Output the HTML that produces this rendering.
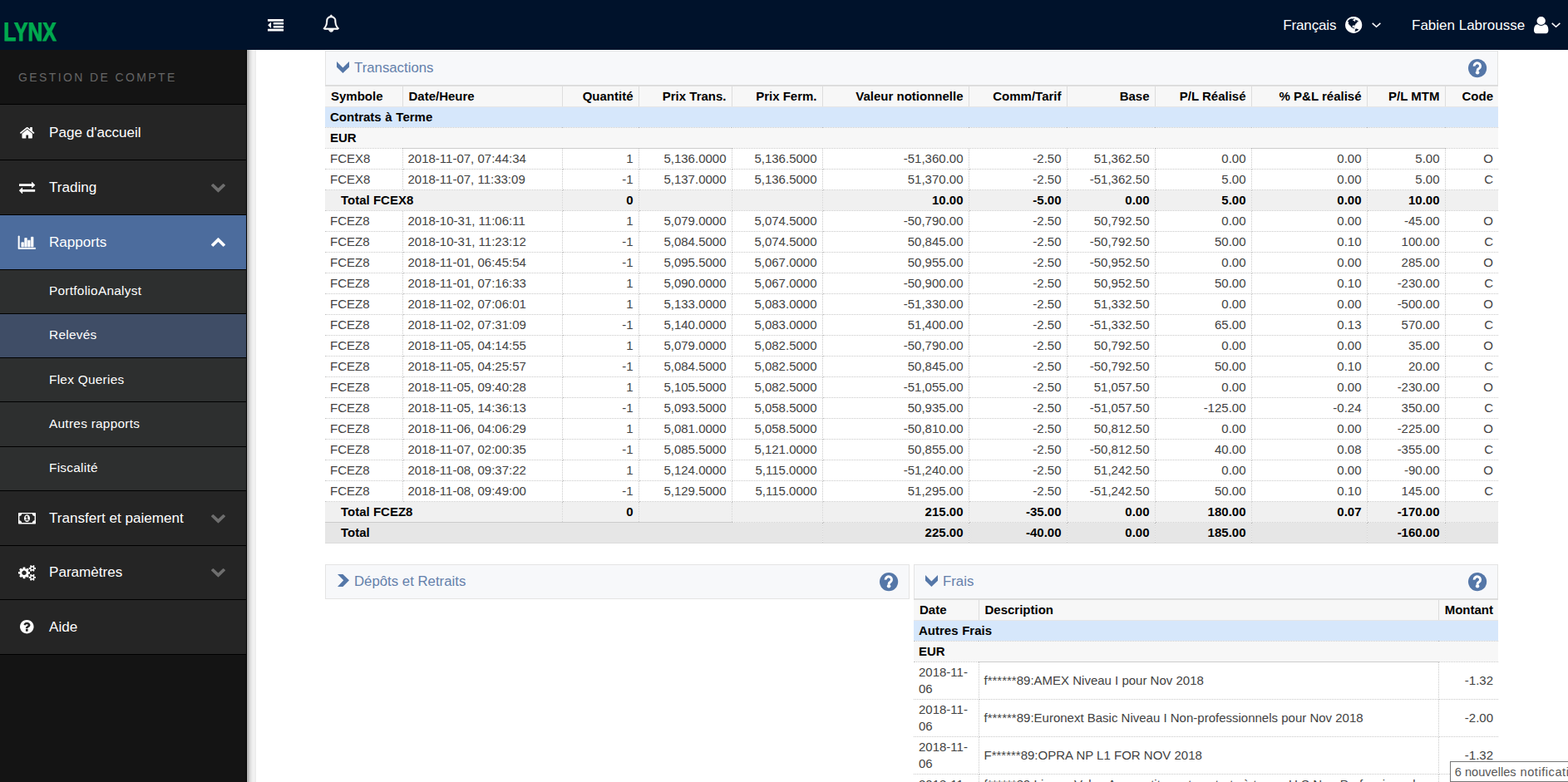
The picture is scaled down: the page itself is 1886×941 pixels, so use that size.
<!DOCTYPE html>
<html lang="fr">
<head>
<meta charset="utf-8">
<title>LYNX - Gestion de compte - Relevés</title>
<style>
html,body{margin:0;padding:0}
body{width:1886px;height:941px;overflow:hidden;background:#fff;position:relative;font-family:"Liberation Sans",sans-serif;color:#000}
.ic{position:absolute;display:block;overflow:visible}
#top{position:absolute;left:0;top:0;width:1886px;height:60px;background:#00122b}
.tt{position:absolute;color:#fff;font-size:17px;line-height:20px;white-space:nowrap}
#side{position:absolute;left:0;top:60px;width:296px;height:881px;background:#141414;border-right:1px solid #000}
#strip{position:absolute;left:297px;top:60px;width:11px;height:881px;background:linear-gradient(to right,#b0b0b0 .5px,#b7b7b7 1.5px,#c9c9c9 2.5px,#d8d8d8 3.5px,#e1e1e1 4.5px,#e8e8e8 5.5px,#eee 6.5px,#f1f1f1 7.5px,#f2f2f2 8.5px,#f0f0f0 9.5px,#ebebeb 10.5px)}
.sec{position:absolute;left:22px;top:24px;font-size:14px;line-height:18px;letter-spacing:2.39px;color:#666;white-space:nowrap}
.it{position:absolute;left:0;width:296px;background:#252525;border-top:1px solid #000;box-sizing:border-box}
.it span{position:absolute;left:59px;color:#fff;font-size:17.1px;line-height:20px;white-space:nowrap}
.it.sub{background:#2d2f2f}
.it.sub span{font-size:15.4px;letter-spacing:.27px}
.it.on{background:#4c6c9d}
.it.cur{background:#3f4d66}
.panel{position:absolute;box-sizing:border-box;height:42px;background:#f7f8fa;border:1px solid #e4e4e4}
.panel h3{position:absolute;left:34px;top:10px;margin:0;font-weight:normal;font-size:16.8px;line-height:20px;color:#6480ab;white-space:nowrap}
table{position:absolute;border-collapse:collapse;table-layout:fixed;font-size:15px;line-height:17px;color:#424242}
td,th{box-sizing:border-box;padding:0 6px;height:25px;border:1px dotted #c8c8c8;text-align:right;white-space:nowrap;overflow:hidden;vertical-align:middle;font-weight:normal}
th{font-weight:bold;color:#000;background:#f7f7f7;padding:0 6px 0 7px;border:1px solid #ddd;border-top:2px solid #ddd;border-bottom-color:#e6e6e6}
td:first-child,th:first-child{border-left:none}
td:last-child,th:last-child{border-right:none}
td.l,th.l{text-align:left}
td.s{border-top:1px solid #ccc}
td.b{border-bottom:1px solid #ccc}
tr.grp td{background:#d6e7fb;color:#000;font-weight:bold;text-align:left;word-spacing:.5px}
tr.cur td{background:#f7f7f7;color:#000;font-weight:bold;text-align:left}
tr.sub td{background:#f0f0f0;color:#000;font-weight:bold}
tr.tot td{background:#e6e6e6;color:#000;font-weight:bold;border-bottom:1px solid #dcdcdc}
td.ind{padding-left:19px;text-align:left}
#fr td{height:45px;white-space:normal;line-height:20px}
#fr tr.grp td,#fr tr.cur td{height:25px;line-height:17px}
#tip{position:absolute;left:1744px;top:916px;width:170px;height:25px;box-sizing:border-box;border:1px solid #767676;background:#fff;color:#575757;font-family:"Liberation Sans",sans-serif;font-size:14.6px;line-height:24px;padding-left:4.8px;white-space:nowrap}
</style>
</head>
<body>
<div id="top">
<svg class="ic" id="logo" style="left:0;top:0;width:120px;height:60px" viewBox="0 0 120 60"><text x="0" y="0" transform="translate(4.2,49.45) scale(0.824,1.04)" font-family="Liberation Sans, sans-serif" font-weight="bold" font-size="30" fill="#00a94f" stroke="#00a94f" stroke-width="0.9" stroke-linejoin="miter" text-rendering="geometricPrecision">LYNX</text></svg>
<svg class="ic" style="left:322.2px;top:23.3px;width:19.1px;height:14.5px" viewBox="0 -1408 1792 1408" preserveAspectRatio="none" aria-hidden="true"><path fill="#fff" transform="scale(1,-1)" d="M384 992v-576q0 -13 -9.5 -22.5t-22.5 -9.5q-14 0 -23 9l-288 288q-9 9 -9 23t9 23l288 288q9 9 23 9q13 0 22.5 -9.5t9.5 -22.5zM1792 224v-192q0 -13 -9.5 -22.5t-22.5 -9.5h-1728q-13 0 -22.5 9.5t-9.5 22.5v192q0 13 9.5 22.5t22.5 9.5h1728q13 0 22.5 -9.5 t9.5 -22.5zM1792 608v-192q0 -13 -9.5 -22.5t-22.5 -9.5h-1088q-13 0 -22.5 9.5t-9.5 22.5v192q0 13 9.5 22.5t22.5 9.5h1088q13 0 22.5 -9.5t9.5 -22.5zM1792 992v-192q0 -13 -9.5 -22.5t-22.5 -9.5h-1088q-13 0 -22.5 9.5t-9.5 22.5v192q0 13 9.5 22.5t22.5 9.5h1088 q13 0 22.5 -9.5t9.5 -22.5zM1792 1376v-192q0 -13 -9.5 -22.5t-22.5 -9.5h-1728q-13 0 -22.5 9.5t-9.5 22.5v192q0 13 9.5 22.5t22.5 9.5h1728q13 0 22.5 -9.5t9.5 -22.5z"/></svg><svg class="ic" style="left:389.2px;top:17.6px;width:18.6px;height:20.3px" viewBox="64 -1536 1664 1792" preserveAspectRatio="none" aria-hidden="true"><path fill="#fff" stroke="#fff" stroke-width="60" transform="scale(1,-1)" d="M912 -160q0 16 -16 16q-59 0 -101.5 42.5t-42.5 101.5q0 16 -16 16t-16 -16q0 -73 51.5 -124.5t124.5 -51.5q16 0 16 16zM246 128h1300q-266 300 -266 832q0 51 -24 105t-69 103t-121.5 80.5t-169.5 31.5t-169.5 -31.5t-121.5 -80.5t-69 -103t-24 -105q0 -532 -266 -832z M1728 128q0 -52 -38 -90t-90 -38h-448q0 -106 -75 -181t-181 -75t-181 75t-75 181h-448q-52 0 -90 38t-38 90q50 42 91 88t85 119.5t74.5 158.5t50 206t19.5 260q0 152 117 282.5t307 158.5q-8 19 -8 39q0 40 28 68t68 28t68 -28t28 -68q0 -20 -8 -39q190 -28 307 -158.5 t117 -282.5q0 -139 19.5 -260t50 -206t74.5 -158.5t85 -119.5t91 -88z"/></svg><div class="tt" style="left:1543.3px;top:21px;letter-spacing:-.15px">Français</div>
<svg class="ic" style="left:1618px;top:19.8px;width:20.3px;height:19.9px" viewBox="0 -1408 1536 1536" preserveAspectRatio="none" aria-hidden="true"><path fill="#fff" transform="scale(1,-1)" d="M768 1408q209 0 385.5 -103t279.5 -279.5t103 -385.5t-103 -385.5t-279.5 -279.5t-385.5 -103t-385.5 103t-279.5 279.5t-103 385.5t103 385.5t279.5 279.5t385.5 103zM1042 887q-2 -1 -9.5 -9.5t-13.5 -9.5q2 0 4.5 5t5 11t3.5 7q6 7 22 15q14 6 52 12q34 8 51 -11 q-2 2 9.5 13t14.5 12q3 2 15 4.5t15 7.5l2 22q-12 -1 -17.5 7t-6.5 21q0 -2 -6 -8q0 7 -4.5 8t-11.5 -1t-9 -1q-10 3 -15 7.5t-8 16.5t-4 15q-2 5 -9.5 11t-9.5 10q-1 2 -2.5 5.5t-3 6.5t-4 5.5t-5.5 2.5t-7 -5t-7.5 -10t-4.5 -5q-3 2 -6 1.5t-4.5 -1t-4.5 -3t-5 -3.5 q-3 -2 -8.5 -3t-8.5 -2q15 5 -1 11q-10 4 -16 3q9 4 7.5 12t-8.5 14h5q-1 4 -8.5 8.5t-17.5 8.5t-13 6q-8 5 -34 9.5t-33 0.5q-5 -6 -4.5 -10.5t4 -14t3.5 -12.5q1 -6 -5.5 -13t-6.5 -12q0 -7 14 -15.5t10 -21.5q-3 -8 -16 -16t-16 -12q-5 -8 -1.5 -18.5t10.5 -16.5 q2 -2 1.5 -4t-3.5 -4.5t-5.5 -4t-6.5 -3.5l-3 -2q-11 -5 -20.5 6t-13.5 26q-7 25 -16 30q-23 8 -29 -1q-5 13 -41 26q-25 9 -58 4q6 1 0 15q-7 15 -19 12q3 6 4 17.5t1 13.5q3 13 12 23q1 1 7 8.5t9.5 13.5t0.5 6q35 -4 50 11q5 5 11.5 17t10.5 17q9 6 14 5.5t14.5 -5.5 t14.5 -5q14 -1 15.5 11t-7.5 20q12 -1 3 17q-4 7 -8 9q-12 4 -27 -5q-8 -4 2 -8q-1 1 -9.5 -10.5t-16.5 -17.5t-16 5q-1 1 -5.5 13.5t-9.5 13.5q-8 0 -16 -15q3 8 -11 15t-24 8q19 12 -8 27q-7 4 -20.5 5t-19.5 -4q-5 -7 -5.5 -11.5t5 -8t10.5 -5.5t11.5 -4t8.5 -3 q14 -10 8 -14q-2 -1 -8.5 -3.5t-11.5 -4.5t-6 -4q-3 -4 0 -14t-2 -14q-5 5 -9 17.5t-7 16.5q7 -9 -25 -6l-10 1q-4 0 -16 -2t-20.5 -1t-13.5 8q-4 8 0 20q1 4 4 2q-4 3 -11 9.5t-10 8.5q-46 -15 -94 -41q6 -1 12 1q5 2 13 6.5t10 5.5q34 14 42 7l5 5q14 -16 20 -25 q-7 4 -30 1q-20 -6 -22 -12q7 -12 5 -18q-4 3 -11.5 10t-14.5 11t-15 5q-16 0 -22 -1q-146 -80 -235 -222q7 -7 12 -8q4 -1 5 -9t2.5 -11t11.5 3q9 -8 3 -19q1 1 44 -27q19 -17 21 -21q3 -11 -10 -18q-1 2 -9 9t-9 4q-3 -5 0.5 -18.5t10.5 -12.5q-7 0 -9.5 -16t-2.5 -35.5 t-1 -23.5l2 -1q-3 -12 5.5 -34.5t21.5 -19.5q-13 -3 20 -43q6 -8 8 -9q3 -2 12 -7.5t15 -10t10 -10.5q4 -5 10 -22.5t14 -23.5q-2 -6 9.5 -20t10.5 -23q-1 0 -2.5 -1t-2.5 -1q3 -7 15.5 -14t15.5 -13q1 -3 2 -10t3 -11t8 -2q2 20 -24 62q-15 25 -17 29q-3 5 -5.5 15.5 t-4.5 14.5q2 0 6 -1.5t8.5 -3.5t7.5 -4t2 -3q-3 -7 2 -17.5t12 -18.5t17 -19t12 -13q6 -6 14 -19.5t0 -13.5q9 0 20 -10.5t17 -19.5q5 -8 8 -26t5 -24q2 -7 8.5 -13.5t12.5 -9.5l16 -8t13 -7q5 -2 18.5 -10.5t21.5 -11.5q10 -4 16 -4t14.5 2.5t13.5 3.5q15 2 29 -15t21 -21 q36 -19 55 -11q-2 -1 0.5 -7.5t8 -15.5t9 -14.5t5.5 -8.5q5 -6 18 -15t18 -15q6 4 7 9q-3 -8 7 -20t18 -10q14 3 14 32q-31 -15 -49 18q0 1 -2.5 5.5t-4 8.5t-2.5 8.5t0 7.5t5 3q9 0 10 3.5t-2 12.5t-4 13q-1 8 -11 20t-12 15q-5 -9 -16 -8t-16 9q0 -1 -1.5 -5.5t-1.5 -6.5 q-13 0 -15 1q1 3 2.5 17.5t3.5 22.5q1 4 5.5 12t7.5 14.5t4 12.5t-4.5 9.5t-17.5 2.5q-19 -1 -26 -20q-1 -3 -3 -10.5t-5 -11.5t-9 -7q-7 -3 -24 -2t-24 5q-13 8 -22.5 29t-9.5 37q0 10 2.5 26.5t3 25t-5.5 24.5q3 2 9 9.5t10 10.5q2 1 4.5 1.5t4.5 0t4 1.5t3 6q-1 1 -4 3 q-3 3 -4 3q7 -3 28.5 1.5t27.5 -1.5q15 -11 22 2q0 1 -2.5 9.5t-0.5 13.5q5 -27 29 -9q3 -3 15.5 -5t17.5 -5q3 -2 7 -5.5t5.5 -4.5t5 0.5t8.5 6.5q10 -14 12 -24q11 -40 19 -44q7 -3 11 -2t4.5 9.5t0 14t-1.5 12.5l-1 8v18l-1 8q-15 3 -18.5 12t1.5 18.5t15 18.5q1 1 8 3.5 t15.5 6.5t12.5 8q21 19 15 35q7 0 11 9q-1 0 -5 3t-7.5 5t-4.5 2q9 5 2 16q5 3 7.5 11t7.5 10q9 -12 21 -2q8 8 1 16q5 7 20.5 10.5t18.5 9.5q7 -2 8 2t1 12t3 12q4 5 15 9t13 5l17 11q3 4 0 4q18 -2 31 11q10 11 -6 20q3 6 -3 9.5t-15 5.5q3 1 11.5 0.5t10.5 1.5 q15 10 -7 16q-17 5 -43 -12zM879 10q206 36 351 189q-3 3 -12.5 4.5t-12.5 3.5q-18 7 -24 8q1 7 -2.5 13t-8 9t-12.5 8t-11 7q-2 2 -7 6t-7 5.5t-7.5 4.5t-8.5 2t-10 -1l-3 -1q-3 -1 -5.5 -2.5t-5.5 -3t-4 -3t0 -2.5q-21 17 -36 22q-5 1 -11 5.5t-10.5 7t-10 1.5t-11.5 -7 q-5 -5 -6 -15t-2 -13q-7 5 0 17.5t2 18.5q-3 6 -10.5 4.5t-12 -4.5t-11.5 -8.5t-9 -6.5t-8.5 -5.5t-8.5 -7.5q-3 -4 -6 -12t-5 -11q-2 4 -11.5 6.5t-9.5 5.5q2 -10 4 -35t5 -38q7 -31 -12 -48q-27 -25 -29 -40q-4 -22 12 -26q0 -7 -8 -20.5t-7 -21.5q0 -6 2 -16z"/></svg><svg class="ic" style="left:1649.5px;top:26.8px;width:12px;height:8px" viewBox="0 0 12 8" aria-hidden="true"><polyline fill="none" stroke="#fff" stroke-width="1.5" points="0.7,0.9 5.55,5.2 10.4,0.9"/></svg><div class="tt" style="left:1698px;top:21px">Fabien Labrousse</div>
<svg class="ic" style="left:1844.6px;top:19.6px;width:17.4px;height:20.2px" viewBox="0 -1408 1280 1536" preserveAspectRatio="none" aria-hidden="true"><path fill="#fff" transform="scale(1,-1)" d="M1280 137q0 -109 -62.5 -187t-150.5 -78h-854q-88 0 -150.5 78t-62.5 187q0 85 8.5 160.5t31.5 152t58.5 131t94 89t134.5 34.5q131 -128 313 -128t313 128q76 0 134.5 -34.5t94 -89t58.5 -131t31.5 -152t8.5 -160.5zM1024 1024q0 -159 -112.5 -271.5t-271.5 -112.5 t-271.5 112.5t-112.5 271.5t112.5 271.5t271.5 112.5t271.5 -112.5t112.5 -271.5z"/></svg><svg class="ic" style="left:1866px;top:26.6px;width:12px;height:8px" viewBox="0 0 12 8" aria-hidden="true"><polyline fill="none" stroke="#fff" stroke-width="1.5" points="0.7,0.9 5.55,5.2 10.4,0.9"/></svg></div>
<div id="side">
<div class="sec">GESTION DE COMPTE</div>
<div class="it " style="top:65px;height:67px"><svg class="ic" style="left:23.8px;top:26.7px;width:17.4px;height:13.4px" viewBox="25.9 -1283 1612.2 1283" preserveAspectRatio="none" aria-hidden="true"><path fill="#fff" transform="scale(1,-1)" d="M1408 544v-480q0 -26 -19 -45t-45 -19h-384v384h-256v-384h-384q-26 0 -45 19t-19 45v480q0 1 0.5 3t0.5 3l575 474l575 -474q1 -2 1 -6zM1631 613l-62 -74q-8 -9 -21 -11h-3q-13 0 -21 7l-692 577l-692 -577q-12 -8 -24 -7q-13 2 -21 11l-62 74q-8 10 -7 23.5t11 21.5 l719 599q32 26 76 26t76 -26l244 -204v195q0 14 9 23t23 9h192q14 0 23 -9t9 -23v-408l219 -182q10 -8 11 -21.5t-7 -23.5z"/></svg><span style="top:24px">Page d'accueil</span></div>
<div class="it " style="top:132px;height:66px"><svg class="ic" style="left:23px;top:26px;width:19.2px;height:14px" viewBox="0 -1248 1792 1344" preserveAspectRatio="none" aria-hidden="true"><path fill="#fff" transform="scale(1,-1)" d="M1792 352v-192q0 -13 -9.5 -22.5t-22.5 -9.5h-1376v-192q0 -13 -9.5 -22.5t-22.5 -9.5q-12 0 -24 10l-319 320q-9 9 -9 22q0 14 9 23l320 320q9 9 23 9q13 0 22.5 -9.5t9.5 -22.5v-192h1376q13 0 22.5 -9.5t9.5 -22.5zM1792 896q0 -14 -9 -23l-320 -320q-9 -9 -23 -9 q-13 0 -22.5 9.5t-9.5 22.5v192h-1376q-13 0 -22.5 9.5t-9.5 22.5v192q0 13 9.5 22.5t22.5 9.5h1376v192q0 14 9 23t23 9q12 0 24 -10l319 -319q9 -9 9 -23z"/></svg><span style="top:23px">Trading</span><svg class="ic" style="left:253.9px;top:27.8px;width:17px;height:10.4px" viewBox="90 -1003 1612 1035" preserveAspectRatio="none" aria-hidden="true"><path fill="#6e6e6e" transform="scale(1,-1)" d="M1683 728l-742 -741q-19 -19 -45 -19t-45 19l-742 741q-19 19 -19 45.5t19 45.5l166 165q19 19 45 19t45 -19l531 -531l531 531q19 19 45 19t45 -19l166 -165q19 -19 19 -45.5t-19 -45.5z"/></svg></div>
<div class="it on" style="top:198px;height:66px"><svg class="ic" style="left:22px;top:24.8px;width:20.6px;height:15.5px" viewBox="0 -1408 2048 1536" preserveAspectRatio="none" aria-hidden="true"><path fill="#fff" stroke="#fff" stroke-width="70" transform="scale(1,-1)" d="M640 640v-512h-256v512h256zM1024 1152v-1024h-256v1024h256zM2048 0v-128h-2048v1536h128v-1408h1920zM1408 896v-768h-256v768h256zM1792 1280v-1152h-256v1152h256z"/></svg><span style="top:23px">Rapports</span><svg class="ic" style="left:253.9px;top:27.2px;width:17px;height:10.8px" viewBox="90 -1056 1612 1035" preserveAspectRatio="none" aria-hidden="true"><path fill="#fff" transform="scale(1,-1)" d="M1683 205l-166 -165q-19 -19 -45 -19t-45 19l-531 531l-531 -531q-19 -19 -45 -19t-45 19l-166 165q-19 19 -19 45.5t19 45.5l742 741q19 19 45 19t45 -19l742 -741q19 -19 19 -45.5t-19 -45.5z"/></svg></div>
<div class="it sub" style="top:264px;height:53px"><span style="top:15px">PortfolioAnalyst</span></div>
<div class="it sub cur" style="top:317px;height:53px"><span style="top:15px">Relevés</span></div>
<div class="it sub" style="top:370px;height:53px"><span style="top:16px">Flex Queries</span></div>
<div class="it sub" style="top:423px;height:54px"><span style="top:16px">Autres rapports</span></div>
<div class="it sub" style="top:477px;height:53px"><span style="top:15px">Fiscalité</span></div>
<div class="it " style="top:530px;height:66px"><svg class="ic" style="left:22.1px;top:25.8px;width:21px;height:13.4px" viewBox="0 -1280 1920 1280" preserveAspectRatio="none" aria-hidden="true"><path fill="#fff" transform="scale(1,-1)" d="M768 384h384v96h-128v448h-114l-148 -137l77 -80q42 37 55 57h2v-288h-128v-96zM1280 640q0 -70 -21 -142t-59.5 -134t-101.5 -101t-138 -39t-138 39t-101.5 101t-59.5 134t-21 142t21 142t59.5 134t101.5 101t138 39t138 -39t101.5 -101t59.5 -134t21 -142zM1792 384 v512q-106 0 -181 75t-75 181h-1152q0 -106 -75 -181t-181 -75v-512q106 0 181 -75t75 -181h1152q0 106 75 181t181 75zM1920 1216v-1152q0 -26 -19 -45t-45 -19h-1792q-26 0 -45 19t-19 45v1152q0 26 19 45t45 19h1792q26 0 45 -19t19 -45z"/></svg><span style="top:23px">Transfert et paiement</span><svg class="ic" style="left:253.9px;top:27.8px;width:17px;height:10.4px" viewBox="90 -1003 1612 1035" preserveAspectRatio="none" aria-hidden="true"><path fill="#6e6e6e" transform="scale(1,-1)" d="M1683 728l-742 -741q-19 -19 -45 -19t-45 19l-742 741q-19 19 -19 45.5t19 45.5l166 165q19 19 45 19t45 -19l531 -531l531 531q19 19 45 19t45 -19l166 -165q19 -19 19 -45.5t-19 -45.5z"/></svg></div>
<div class="it " style="top:596px;height:65px"><svg class="ic" style="left:22.1px;top:23.3px;width:21px;height:18.7px" viewBox="0 -1520 1920 1761" preserveAspectRatio="none" aria-hidden="true"><path fill="#fff" transform="scale(1,-1)" d="M896 640q0 106 -75 181t-181 75t-181 -75t-75 -181t75 -181t181 -75t181 75t75 181zM1664 128q0 52 -38 90t-90 38t-90 -38t-38 -90q0 -53 37.5 -90.5t90.5 -37.5t90.5 37.5t37.5 90.5zM1664 1152q0 52 -38 90t-90 38t-90 -38t-38 -90q0 -53 37.5 -90.5t90.5 -37.5 t90.5 37.5t37.5 90.5zM1280 731v-185q0 -10 -7 -19.5t-16 -10.5l-155 -24q-11 -35 -32 -76q34 -48 90 -115q7 -11 7 -20q0 -12 -7 -19q-23 -30 -82.5 -89.5t-78.5 -59.5q-11 0 -21 7l-115 90q-37 -19 -77 -31q-11 -108 -23 -155q-7 -24 -30 -24h-186q-11 0 -20 7.5t-10 17.5 l-23 153q-34 10 -75 31l-118 -89q-7 -7 -20 -7q-11 0 -21 8q-144 133 -144 160q0 9 7 19q10 14 41 53t47 61q-23 44 -35 82l-152 24q-10 1 -17 9.5t-7 19.5v185q0 10 7 19.5t16 10.5l155 24q11 35 32 76q-34 48 -90 115q-7 11 -7 20q0 12 7 20q22 30 82 89t79 59q11 0 21 -7 l115 -90q34 18 77 32q11 108 23 154q7 24 30 24h186q11 0 20 -7.5t10 -17.5l23 -153q34 -10 75 -31l118 89q8 7 20 7q11 0 21 -8q144 -133 144 -160q0 -8 -7 -19q-12 -16 -42 -54t-45 -60q23 -48 34 -82l152 -23q10 -2 17 -10.5t7 -19.5zM1920 198v-140q0 -16 -149 -31 q-12 -27 -30 -52q51 -113 51 -138q0 -4 -4 -7q-122 -71 -124 -71q-8 0 -46 47t-52 68q-20 -2 -30 -2t-30 2q-14 -21 -52 -68t-46 -47q-2 0 -124 71q-4 3 -4 7q0 25 51 138q-18 25 -30 52q-149 15 -149 31v140q0 16 149 31q13 29 30 52q-51 113 -51 138q0 4 4 7q4 2 35 20 t59 34t30 16q8 0 46 -46.5t52 -67.5q20 2 30 2t30 -2q51 71 92 112l6 2q4 0 124 -70q4 -3 4 -7q0 -25 -51 -138q17 -23 30 -52q149 -15 149 -31zM1920 1222v-140q0 -16 -149 -31q-12 -27 -30 -52q51 -113 51 -138q0 -4 -4 -7q-122 -71 -124 -71q-8 0 -46 47t-52 68 q-20 -2 -30 -2t-30 2q-14 -21 -52 -68t-46 -47q-2 0 -124 71q-4 3 -4 7q0 25 51 138q-18 25 -30 52q-149 15 -149 31v140q0 16 149 31q13 29 30 52q-51 113 -51 138q0 4 4 7q4 2 35 20t59 34t30 16q8 0 46 -46.5t52 -67.5q20 2 30 2t30 -2q51 71 92 112l6 2q4 0 124 -70 q4 -3 4 -7q0 -25 -51 -138q17 -23 30 -52q149 -15 149 -31z"/></svg><span style="top:22px">Paramètres</span><svg class="ic" style="left:253.9px;top:26.8px;width:17px;height:10.4px" viewBox="90 -1003 1612 1035" preserveAspectRatio="none" aria-hidden="true"><path fill="#6e6e6e" transform="scale(1,-1)" d="M1683 728l-742 -741q-19 -19 -45 -19t-45 19l-742 741q-19 19 -19 45.5t19 45.5l166 165q19 19 45 19t45 -19l531 -531l531 531q19 19 45 19t45 -19l166 -165q19 -19 19 -45.5t-19 -45.5z"/></svg></div>
<div class="it " style="top:661px;height:66px"><svg class="ic" style="left:23.8px;top:24.4px;width:16.6px;height:16.4px" viewBox="0 -1408 1536 1536" preserveAspectRatio="none" aria-hidden="true"><path fill="#fff" transform="scale(1,-1)" d="M896 160v192q0 14 -9 23t-23 9h-192q-14 0 -23 -9t-9 -23v-192q0 -14 9 -23t23 -9h192q14 0 23 9t9 23zM1152 832q0 88 -55.5 163t-138.5 116t-170 41q-243 0 -371 -213q-15 -24 8 -42l132 -100q7 -6 19 -6q16 0 25 12q53 68 86 92q34 24 86 24q48 0 85.5 -26t37.5 -59 q0 -38 -20 -61t-68 -45q-63 -28 -115.5 -86.5t-52.5 -125.5v-36q0 -14 9 -23t23 -9h192q14 0 23 9t9 23q0 19 21.5 49.5t54.5 49.5q32 18 49 28.5t46 35t44.5 48t28 60.5t12.5 81zM1536 640q0 -209 -103 -385.5t-279.5 -279.5t-385.5 -103t-385.5 103t-279.5 279.5 t-103 385.5t103 385.5t279.5 279.5t385.5 103t385.5 -103t279.5 -279.5t103 -385.5z"/></svg><span style="top:23px">Aide</span></div>
<div class="it" style="top:727px;height:1px;background:#000"></div>
</div>
<div id="strip"></div>
<div class="panel" style="left:391px;top:61px;width:1411px"><svg class="ic" style="left:13px;top:11.9px;width:16px;height:16px" viewBox="0 0 16 16" aria-hidden="true"><polygon fill="#5577a8" points="0,0 7.4,7.4 15,0 15,6.8 7.4,14 0,6.8"/></svg><h3>Transactions</h3><svg class="ic" style="left:1374.3px;top:8.8px;width:22.2px;height:22.2px" viewBox="-1 -1 2 2" aria-hidden="true"><circle r="1" fill="#5577a8"/><path d="M-0.35,-0.22 A0.33,0.33 0 1 1 0.19,0.01 Q0,0.10 0,0.27" fill="none" stroke="#fff" stroke-width="0.27"/><circle cx="0" cy="0.47" r="0.2" fill="#fff"/></svg></div>
<table id="tx" style="left:391px;top:102px;width:1411px">
<colgroup><col style="width:93px"><col style="width:192px"><col style="width:92px"><col style="width:112px"><col style="width:109px"><col style="width:176px"><col style="width:118px"><col style="width:106px"><col style="width:116px"><col style="width:139px"><col style="width:94px"><col style="width:64px"></colgroup>
<thead><tr><th class="l">Symbole</th><th class="l">Date/Heure</th><th>Quantité</th><th>Prix Trans.</th><th>Prix Ferm.</th><th>Valeur notionnelle</th><th>Comm/Tarif</th><th>Base</th><th>P/L Réalisé</th><th>% P&amp;L réalisé</th><th>P/L MTM</th><th>Code</th></tr></thead>
<tbody>
<tr class="grp"><td colspan="12">Contrats à Terme</td></tr>
<tr class="cur"><td colspan="12">EUR</td></tr>
<tr><td class="l">FCEX8</td><td class="l s">2018-11-07, 07:44:34</td><td class="s">1</td><td class="s">5,136.0000</td><td>5,136.5000</td><td>-51,360.00</td><td>-2.50</td><td>51,362.50</td><td>0.00</td><td class="s">0.00</td><td class="s">5.00</td><td>O</td></tr>
<tr><td class="l">FCEX8</td><td class="l">2018-11-07, 11:33:09</td><td>-1</td><td>5,137.0000</td><td>5,136.5000</td><td>51,370.00</td><td>-2.50</td><td>-51,362.50</td><td>5.00</td><td>0.00</td><td>5.00</td><td>C</td></tr>
<tr class="sub"><td class="ind" colspan="2">Total FCEX8</td><td>0</td><td></td><td></td><td>10.00</td><td>-5.00</td><td>0.00</td><td>5.00</td><td>0.00</td><td>10.00</td><td></td></tr>
<tr><td class="l">FCEZ8</td><td class="l">2018-10-31, 11:06:11</td><td>1</td><td>5,079.0000</td><td>5,074.5000</td><td>-50,790.00</td><td>-2.50</td><td>50,792.50</td><td>0.00</td><td>0.00</td><td>-45.00</td><td>O</td></tr>
<tr><td class="l">FCEZ8</td><td class="l">2018-10-31, 11:23:12</td><td>-1</td><td>5,084.5000</td><td>5,074.5000</td><td>50,845.00</td><td>-2.50</td><td>-50,792.50</td><td>50.00</td><td>0.10</td><td>100.00</td><td>C</td></tr>
<tr><td class="l">FCEZ8</td><td class="l">2018-11-01, 06:45:54</td><td>-1</td><td>5,095.5000</td><td>5,067.0000</td><td>50,955.00</td><td>-2.50</td><td>-50,952.50</td><td>0.00</td><td>0.00</td><td>285.00</td><td>O</td></tr>
<tr><td class="l">FCEZ8</td><td class="l">2018-11-01, 07:16:33</td><td>1</td><td>5,090.0000</td><td>5,067.0000</td><td>-50,900.00</td><td>-2.50</td><td>50,952.50</td><td>50.00</td><td>0.10</td><td>-230.00</td><td>C</td></tr>
<tr><td class="l">FCEZ8</td><td class="l">2018-11-02, 07:06:01</td><td>1</td><td>5,133.0000</td><td>5,083.0000</td><td>-51,330.00</td><td>-2.50</td><td>51,332.50</td><td>0.00</td><td>0.00</td><td>-500.00</td><td>O</td></tr>
<tr><td class="l">FCEZ8</td><td class="l">2018-11-02, 07:31:09</td><td>-1</td><td>5,140.0000</td><td>5,083.0000</td><td>51,400.00</td><td>-2.50</td><td>-51,332.50</td><td>65.00</td><td>0.13</td><td>570.00</td><td>C</td></tr>
<tr><td class="l">FCEZ8</td><td class="l">2018-11-05, 04:14:55</td><td>1</td><td>5,079.0000</td><td>5,082.5000</td><td>-50,790.00</td><td>-2.50</td><td>50,792.50</td><td>0.00</td><td>0.00</td><td>35.00</td><td>O</td></tr>
<tr><td class="l">FCEZ8</td><td class="l">2018-11-05, 04:25:57</td><td>-1</td><td>5,084.5000</td><td>5,082.5000</td><td>50,845.00</td><td>-2.50</td><td>-50,792.50</td><td>50.00</td><td>0.10</td><td>20.00</td><td>C</td></tr>
<tr><td class="l">FCEZ8</td><td class="l">2018-11-05, 09:40:28</td><td>1</td><td>5,105.5000</td><td>5,082.5000</td><td>-51,055.00</td><td>-2.50</td><td>51,057.50</td><td>0.00</td><td>0.00</td><td>-230.00</td><td>O</td></tr>
<tr><td class="l">FCEZ8</td><td class="l">2018-11-05, 14:36:13</td><td>-1</td><td>5,093.5000</td><td>5,058.5000</td><td>50,935.00</td><td>-2.50</td><td>-51,057.50</td><td>-125.00</td><td>-0.24</td><td>350.00</td><td>C</td></tr>
<tr><td class="l">FCEZ8</td><td class="l">2018-11-06, 04:06:29</td><td>1</td><td>5,081.0000</td><td>5,058.5000</td><td>-50,810.00</td><td>-2.50</td><td>50,812.50</td><td>0.00</td><td>0.00</td><td>-225.00</td><td>O</td></tr>
<tr><td class="l">FCEZ8</td><td class="l">2018-11-07, 02:00:35</td><td>-1</td><td>5,085.5000</td><td>5,121.0000</td><td>50,855.00</td><td>-2.50</td><td>-50,812.50</td><td>40.00</td><td>0.08</td><td>-355.00</td><td>C</td></tr>
<tr><td class="l">FCEZ8</td><td class="l">2018-11-08, 09:37:22</td><td>1</td><td>5,124.0000</td><td>5,115.0000</td><td>-51,240.00</td><td>-2.50</td><td>51,242.50</td><td>0.00</td><td>0.00</td><td>-90.00</td><td>O</td></tr>
<tr><td class="l">FCEZ8</td><td class="l">2018-11-08, 09:49:00</td><td>-1</td><td>5,129.5000</td><td>5,115.0000</td><td>51,295.00</td><td>-2.50</td><td>-51,242.50</td><td>50.00</td><td>0.10</td><td>145.00</td><td>C</td></tr>
<tr class="sub"><td class="ind b" colspan="2">Total FCEZ8</td><td class="b">0</td><td class="b"></td><td></td><td>215.00</td><td>-35.00</td><td>0.00</td><td>180.00</td><td>0.07</td><td>-170.00</td><td></td></tr>
<tr class="tot"><td class="ind" colspan="5">Total</td><td>225.00</td><td>-40.00</td><td>0.00</td><td>185.00</td><td></td><td>-160.00</td><td></td></tr>
</tbody></table>
<div class="panel" style="left:391px;top:679px;width:703px"><svg class="ic" style="left:14px;top:11.1px;width:16px;height:16px" viewBox="0 0 16 16" aria-hidden="true"><polygon fill="#5577a8" points="0,0 6.4,0 14,7.3 6.4,14.9 0,14.9 7.2,7.3"/></svg><h3>Dépôts et Retraits</h3><svg class="ic" style="left:666.3px;top:8.8px;width:22.2px;height:22.2px" viewBox="-1 -1 2 2" aria-hidden="true"><circle r="1" fill="#5577a8"/><path d="M-0.35,-0.22 A0.33,0.33 0 1 1 0.19,0.01 Q0,0.10 0,0.27" fill="none" stroke="#fff" stroke-width="0.27"/><circle cx="0" cy="0.47" r="0.2" fill="#fff"/></svg></div>
<div class="panel" style="left:1099px;top:679px;width:703px"><svg class="ic" style="left:13px;top:11.9px;width:16px;height:16px" viewBox="0 0 16 16" aria-hidden="true"><polygon fill="#5577a8" points="0,0 7.4,7.4 15,0 15,6.8 7.4,14 0,6.8"/></svg><h3>Frais</h3><svg class="ic" style="left:666.3px;top:8.8px;width:22.2px;height:22.2px" viewBox="-1 -1 2 2" aria-hidden="true"><circle r="1" fill="#5577a8"/><path d="M-0.35,-0.22 A0.33,0.33 0 1 1 0.19,0.01 Q0,0.10 0,0.27" fill="none" stroke="#fff" stroke-width="0.27"/><circle cx="0" cy="0.47" r="0.2" fill="#fff"/></svg></div>
<table id="fr" style="left:1099px;top:720px;width:703px">
<colgroup><col style="width:78px"><col style="width:553px"><col style="width:72px"></colgroup>
<thead><tr><th class="l">Date</th><th class="l">Description</th><th>Montant</th></tr></thead>
<tbody>
<tr class="grp"><td colspan="3">Autres Frais</td></tr>
<tr class="cur"><td colspan="3">EUR</td></tr>
<tr><td class="l">2018-11-06</td><td class="l s">f******89:AMEX Niveau I pour Nov 2018</td><td>-1.32</td></tr>
<tr><td class="l">2018-11-06</td><td class="l">f******89:Euronext Basic Niveau I Non-professionnels pour Nov 2018</td><td>-2.00</td></tr>
<tr><td class="l">2018-11-06</td><td class="l">F******89:OPRA NP L1 FOR NOV 2018</td><td>-1.32</td></tr>
<tr><td class="l">2018-11-06</td><td class="l">f******89:Lignes Value Aperçu titres et contrats à terme U.S Non-Professionnels pour Nov 2018</td><td>-4.37</td></tr>
</tbody></table>
<div id="tip">6 nouvelles <span style="letter-spacing:.55px;margin-left:.8px">notifications</span></div>
</body>
</html>
